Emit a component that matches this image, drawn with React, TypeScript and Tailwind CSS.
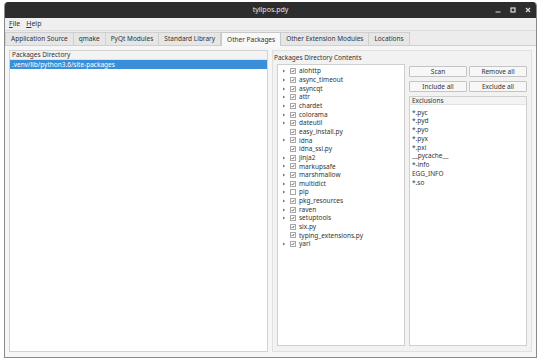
const tabs = [
  'Application Source',
  'qmake',
  'PyQt Modules',
  'Standard Library',
  'Other Packages',
  'Other Extension Modules',
  'Locations',
]

const packages: { name: string; tree: boolean; checked: boolean }[] = [
  { name: 'aiohttp', tree: true, checked: true },
  { name: 'async_timeout', tree: true, checked: true },
  { name: 'asyncqt', tree: true, checked: true },
  { name: 'attr', tree: true, checked: true },
  { name: 'chardet', tree: true, checked: true },
  { name: 'colorama', tree: true, checked: true },
  { name: 'dateutil', tree: true, checked: true },
  { name: 'easy_install.py', tree: false, checked: true },
  { name: 'idna', tree: true, checked: true },
  { name: 'idna_ssl.py', tree: false, checked: true },
  { name: 'jinja2', tree: true, checked: true },
  { name: 'markupsafe', tree: true, checked: true },
  { name: 'marshmallow', tree: true, checked: true },
  { name: 'multidict', tree: true, checked: true },
  { name: 'pip', tree: true, checked: false },
  { name: 'pkg_resources', tree: true, checked: true },
  { name: 'raven', tree: true, checked: true },
  { name: 'setuptools', tree: true, checked: true },
  { name: 'six.py', tree: false, checked: true },
  { name: 'typing_extensions.py', tree: false, checked: true },
  { name: 'yarl', tree: true, checked: true },
]

const exclusions = ['*.pyc', '*.pyd', '*.pyo', '*.pyx', '*.pxi', '__pycache__', '*-info', 'EGG_INFO', '*.so']

function Check({ on }: { on: boolean }) {
  return (
    <div className="flex h-[6px] w-[6px] items-center justify-center border border-[#a8a8a8] bg-white">
      {on ? (
        <svg width="6" height="6" viewBox="0 0 6 6">
          <path d="M1 3.2 L2.4 4.6 L5 1.2" fill="none" stroke="#222" strokeWidth="1" />
        </svg>
      ) : null}
    </div>
  )
}

function Button({ label }: { label: string }) {
  return (
    <div className="flex h-[11px] flex-1 items-center justify-center rounded-[1px] border border-[#c4c4c4] bg-[#f7f7f7] text-[6.5px]">
      {label}
    </div>
  )
}

export default function App() {
  return (
    <div
      className="h-[362px] w-[541px] bg-white pl-[4px] pt-[2px] text-[#333]"
      style={{ fontFamily: '"Noto Sans", "Open Sans", sans-serif' }}
    >
      <div className="flex h-[356px] w-[533px] flex-col overflow-hidden rounded-t-[4px] border-x border-b border-[#8a8a8a] bg-[#f3f3f3]">
        {/* title bar */}
        <div className="relative flex h-[16px] shrink-0 items-center justify-center bg-[#2d2d2d] text-[7px] text-[#e6e6e6]">
          tyllpos.pdy
          <div className="absolute right-[5px] top-0 flex h-[16px] items-center gap-[9px] text-[#dcdcdc]">
            <svg width="6" height="6" viewBox="0 0 6 6">
              <path d="M0.5 5 H5.5" stroke="currentColor" strokeWidth="1.2" />
            </svg>
            <svg width="6" height="6" viewBox="0 0 6 6">
              <rect x="1" y="1" width="4" height="4" fill="none" stroke="currentColor" strokeWidth="1.2" />
            </svg>
            <svg width="6" height="6" viewBox="0 0 6 6">
              <path d="M1 1 L5 5 M5 1 L1 5" stroke="currentColor" strokeWidth="1.2" />
            </svg>
          </div>
        </div>

        {/* menu */}
        <div className="flex h-[13px] shrink-0 items-center gap-[6px] border-b border-[#dcdcdc] bg-[#efefef] pl-[4px] text-[7px]">
          <span>
            <span className="underline">F</span>ile
          </span>
          <span>
            <span className="underline">H</span>elp
          </span>
        </div>

        {/* tabs */}
        <div className="flex h-[15px] shrink-0 items-end bg-[#ececec]">
          {tabs.map((t) =>
            t === 'Other Packages' ? (
              <div
                key={t}
                className="-mb-px flex h-[15px] items-center border-x border-t border-[#c8c8c8] bg-[#f8f8f8] px-[5px] text-[6.5px]"
              >
                {t}
              </div>
            ) : (
              <div
                key={t}
                className="flex h-[14px] items-center border-r border-t border-b border-[#cfcfcf] bg-[#e6e6e6] px-[5px] text-[6.5px] first:border-l"
              >
                {t}
              </div>
            )
          )}
          <div className="h-px flex-1 self-end bg-[#cfcfcf]" />
        </div>

        {/* content */}
        <div className="flex min-h-0 flex-1 gap-[4px] bg-[#f6f6f6] px-[4px] pb-[5px] pt-[4px]">
          {/* packages directory */}
          <div className="flex w-[259px] flex-col border border-[#d2d2d2] bg-white">
            <div className="flex h-[9px] items-center border-b border-[#e2e2e2] bg-[#f3f3f3] pl-[2px] text-[6.5px]">
              Packages Directory
            </div>
            <div className="flex h-[9px] items-center bg-[#3b8ed8] pl-[2px] text-[6.5px] text-white">
              .venv/lib/python3.6/site-packages
            </div>
          </div>

          {/* contents panel */}
          <div className="flex flex-1 flex-col border border-[#e0e0e0] bg-[#f2f2f2] px-[4px] pb-[5px]">
            <div className="-ml-[3px] flex h-[12px] items-end text-[6.5px]">Packages Directory Contents</div>
            <div className="mt-[1px] flex min-h-0 flex-1 gap-[4px]">
              <div className="flex w-[128px] flex-col border border-[#cfcfcf] bg-white pl-[4px] pt-[2px]">
                {packages.map((p) => (
                  <div key={p.name} className="flex h-[8.65px] items-center text-[6.5px]">
                    <div className="flex w-[8px] items-center">
                      {p.tree ? (
                        <svg width="4" height="4" viewBox="0 0 4 4">
                          <path d="M1 0.5 L3.2 2 L1 3.5 Z" fill="#777" />
                        </svg>
                      ) : null}
                    </div>
                    <Check on={p.checked} />
                    <span className="ml-[3px]">{p.name}</span>
                  </div>
                ))}
              </div>

              <div className="flex flex-1 flex-col pt-[2px]">
                <div className="flex gap-[2px]">
                  <Button label="Scan" />
                  <Button label="Remove all" />
                </div>
                <div className="mt-[4px] flex gap-[2px]">
                  <Button label="Include all" />
                  <Button label="Exclude all" />
                </div>
                <div className="mt-[4px] flex min-h-0 flex-1 flex-col border border-[#cfcfcf] bg-white">
                  <div className="flex h-[8px] items-center border-b border-[#e2e2e2] bg-[#f3f3f3] pl-[2px] text-[6.5px]">
                    Exclusions
                  </div>
                  <div className="pl-[2px] pt-[3px]">
                    {exclusions.map((e) => (
                      <div key={e} className="flex h-[8.75px] items-center text-[6.5px]">
                        {e}
                      </div>
                    ))}
                  </div>
                </div>
              </div>
            </div>
          </div>
        </div>
      </div>
    </div>
  )
}
